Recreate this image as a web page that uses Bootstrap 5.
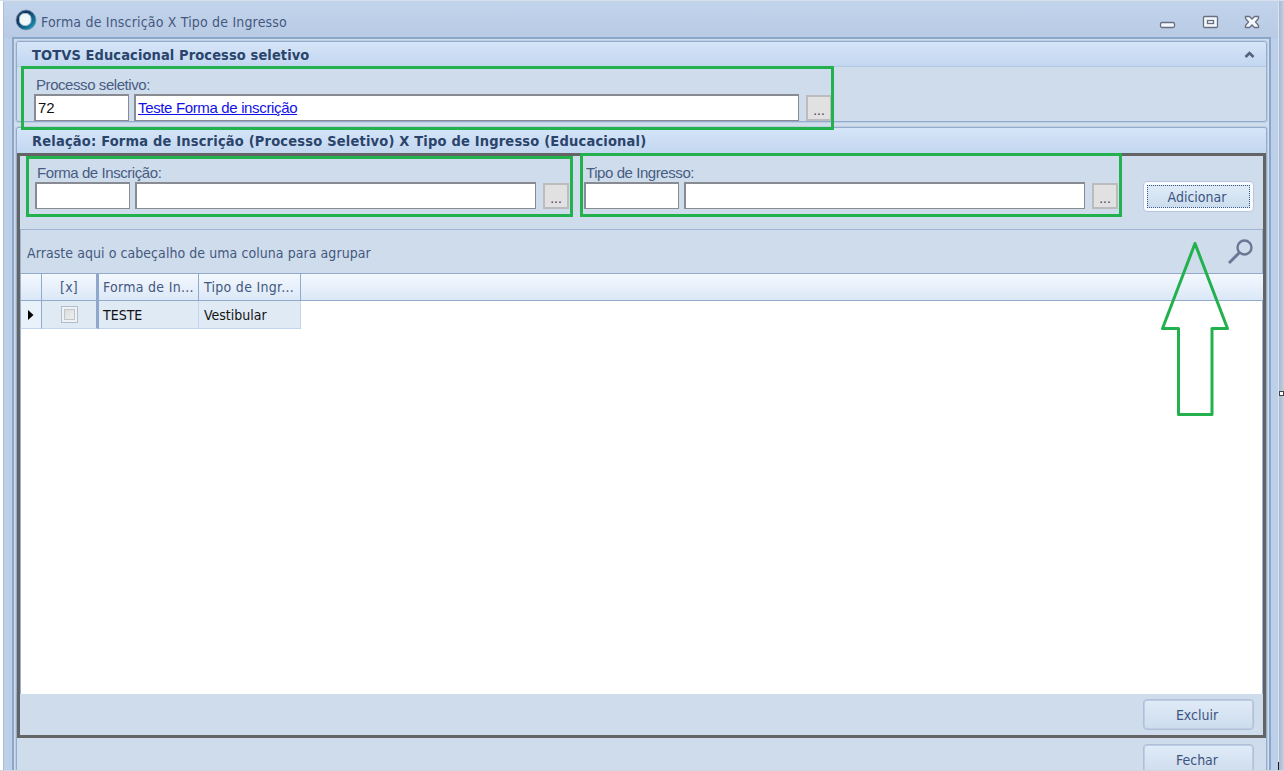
<!DOCTYPE html>
<html lang="pt-BR">
<head>
<meta charset="utf-8">
<title>Forma de Inscrição X Tipo de Ingresso</title>
<link href="https://cdn.jsdelivr.net/npm/bootstrap@5.3.0/dist/css/bootstrap.min.css" rel="stylesheet">
<style>
html,body{height:771px;overflow:hidden}
body{background:#c9d3e5;font:14px/18px "DejaVu Sans Condensed","DejaVu Sans",sans-serif;font-stretch:condensed;color:#44597f;white-space:nowrap}
.desk{width:1284px;height:771px;padding:1px 5px 1px 1px;background:linear-gradient(90deg,#fff 0 3px,#c5d3e7 3px 1279px,#a9b8cd 1279px,#c9cfdd 1284px);border-top:1px solid #d4deed}
.win{margin-left:2px;height:769px;border-left:1px solid #abbdd6;border-right:1px solid #d8e4f3;background:linear-gradient(#c2d4ec,#b9cbe4 36px,#bcd0e9 37px)}
.titlebar{height:35px;padding:3px 17px 0 11px}
.titlebar>svg:first-child{margin-top:-2px}
.titlebar>svg:last-child{margin-top:-1px}
.inner{margin:0 7px 0 8px;height:733px;border:solid #8ba6c8;border-width:2px 2px 0;background:#d0dded;padding:2px 2px 0}
.pane{border:1px solid #93acce;border-radius:3px;background:#cfdcec;overflow:hidden}
.pane-a{height:81px;box-shadow:0 0 0 1px #bdcee3}
.pane-b{height:660px;margin-top:5px;border-bottom:0;box-shadow:0 0 0 1px #bdcee3}
.head{height:25px;padding:0 11px 0 15px;background:linear-gradient(#d6e5f8,#c2d7f0);border-bottom:1px solid #b4c9e2;font-weight:bold;font-size:14.5px;color:#2a446b}
.pane-b .head{border-bottom:0}
.dark{height:585px;border:3px solid #646464;background:#cfdcec}
.lbl{font:15px/18px "Liberation Sans",sans-serif;color:#485c82;letter-spacing:-.43px;padding-left:2px}
.field{height:27px;border:solid #888b91;border-width:2px 1px 1px 2px;background:#fff;font:15px/23px "Liberation Sans",sans-serif;padding-left:2px;color:#111}
.w-s{width:95px}
.w-m{width:401px;margin-left:5px}
.w-l{width:666px;margin-left:5px}
.dots{width:26px;height:26px;margin:1px 0 0 7px;border:2px solid #bcbcbe;background:#e1e1e1;font:14px/26px "Liberation Sans",sans-serif;color:#533a64;text-align:center}
.btx{width:111px;height:31px;border:1px solid #afbfda;border-radius:4px;background:linear-gradient(#e0ebf8,#cddcec);box-shadow:inset 0 0 0 1px #bfcce2;color:#3d5480;padding:0 3px 0 0;font-size:14px;line-height:30px}
.btx-focus{background:#f8fbff;box-shadow:none;padding:3px;border-color:#b8c6df}
.btx-focus span{display:block;height:23px;line-height:22px;padding-right:3px;border:1px dotted #3d5786;background:linear-gradient(#dfecf9,#cbdded)}
.groupbar{height:44px;border:1px solid #9fb4d2;border-width:1px 1px 0;padding:0 8px 0 6px}
.ghead{height:28px;border-top:1px solid #91a9cb;border-bottom:1px solid #91a9cb;background:linear-gradient(#f4f8fe,#dbe8f7);letter-spacing:.28px}
.ghead>div{height:100%;line-height:26px}
.grow>div{height:100%;line-height:28px}
.c0{width:22px;border-left:1px solid #9bb1d0;border-right:1px solid #91a9cb}
.c1{width:57px;border-right:3px solid #8ea7ca}
.c2{width:100px;border-right:1px solid #91a9cb;padding-left:4px}
.c3{width:102px;border-right:1px solid #91a9cb;padding-left:5px}
.grow{height:28px;color:#111;margin-left:-1px}
.grow>div{background:#e0eaf5;border-bottom:1px solid #c1d5f1}
.grow .c2,.grow .c3{border-right-color:#c1d5f1}
.grow .c0{background:#e9f2fb}
.chk{width:17px;height:17px;border:1px solid #b3bdca;background:linear-gradient(135deg,#d5d7da,#f3f3f3);box-shadow:inset 0 0 0 2px #eef1f5,inset 0 0 0 3px #c1c5ca}
.gbody{height:393px;background:#fff;border-left:1px solid #9bb1d0;border-right:1px solid #9bb1d0}
.note{position:absolute;border:3px solid #22b14c}
.overlay{position:absolute;left:0;top:0;pointer-events:none}
</style>
</head>
<body>
<div class="desk position-relative">
 <div class="win">
  <div class="titlebar d-flex align-items-center">
   <svg width="22" height="22" viewBox="0 0 22 22"><defs><linearGradient id="g" x1="0" y1="0" x2="1" y2="1"><stop offset="0" stop-color="#5d7590"/><stop offset=".3" stop-color="#12305c"/><stop offset=".75" stop-color="#157da0"/><stop offset="1" stop-color="#35c1d8"/></linearGradient></defs><circle cx="11" cy="11" r="10" fill="url(#g)" stroke="#7190a9" stroke-width=".7"/><rect x="4.500" y="4.500" width="11.500" height="12" rx="5" fill="#f2f7fa" stroke="#a6c2d2"/></svg>
   <span class="ms-1" style="letter-spacing:.18px;padding-top:2px">Forma de Inscrição X Tipo de Ingresso</span>
   <svg class="ms-auto" width="104" height="18" viewBox="0 0 104 18" fill="none"><rect x="3.500" y="10.500" width="14" height="5" rx="1.500" fill="#f4f7fb" stroke="#676f83" stroke-width="1.300"/><rect x="46.500" y="4.500" width="14" height="11" rx="1" fill="#f4f7fb" stroke="#676f83" stroke-width="1.300"/><rect x="50.500" y="8.500" width="6" height="3" stroke="#676f83" stroke-width="1.300"/><path transform="translate(1 1)" d="M87.500 3.500h4l2.500 2.500 2.500-2.500h4v2L97.500 9l3 3.500v2h-4L94 12l-2.500 2.500h-4v-2L90.500 9l-3-3.500z" fill="#f4f7fb" stroke="#676f83" stroke-width="1.300"/></svg>
  </div>
  <div class="inner">
   <section class="pane pane-a">
    <div class="head d-flex align-items-center justify-content-between"><span style="letter-spacing:.1px;padding-top:1px">TOTVS Educacional Processo seletivo</span><svg width="11" height="9" viewBox="0 0 11 9"><path d="M1.500 7L5.500 3l4 4" fill="none" stroke="#53617c" stroke-width="2.600"/></svg></div>
    <div style="padding:9px 0 0 17px">
     <div class="lbl">Processo seletivo:</div>
     <div class="d-flex"><div class="field w-s">72</div><div class="field w-l" style="width:665px"><a href="#" style="color:#1212e8;letter-spacing:-.35px">Teste Forma de inscrição</a></div><div class="dots">...</div></div>
    </div>
   </section>
   <section class="pane pane-b">
    <div class="head d-flex align-items-center"><span style="letter-spacing:.19px">Relação: Forma de Inscrição (Processo Seletivo) X Tipo de Ingresso (Educacional)</span></div>
    <div class="dark">
     <div class="d-flex" style="height:73px;padding:8px 0 0 15px">
      <div style="width:549px"><div class="lbl">Forma de Inscrição:</div><div class="d-flex"><div class="field w-s"></div><div class="field w-m"></div><div class="dots">...</div></div></div>
      <div style="width:559px"><div class="lbl">Tipo de Ingresso:</div><div class="d-flex"><div class="field w-s"></div><div class="field w-m"></div><div class="dots">...</div></div></div>
      <button class="btx btx-focus" style="margin-top:17px"><span>Adicionar</span></button>
     </div>
     <div class="groupbar d-flex align-items-center justify-content-between"><span style="margin-top:2px;letter-spacing:.06px">Arraste aqui o cabeçalho de uma coluna para agrupar</span><svg style="margin-top:2px" width="27" height="27" viewBox="0 0 27 27" fill="none" stroke="#6a7694"><circle cx="17.500" cy="8.500" r="7" stroke-width="2.400"/><path d="M12.500 13.500L2 24" stroke-width="3"/></svg></div>
     <div class="ghead d-flex"><div class="c0"></div><div class="c1 text-center">[x]</div><div class="c2">Forma de In...</div><div class="c3">Tipo de Ingr...</div></div>
     <div class="gbody"><div class="grow d-flex"><div class="c0 d-flex align-items-center justify-content-center"><svg width="6" height="10"><path d="M0 0l5.500 5L0 10z" fill="#000"/></svg></div><div class="c1 d-flex align-items-center justify-content-center"><div class="chk"></div></div><div class="c2">TESTE</div><div class="c3">Vestibular</div></div></div>
     <div class="d-flex justify-content-end" style="padding:5px 9px 0 0"><button class="btx">Excluir</button></div>
    </div>
    <div class="d-flex justify-content-end" style="padding:6px 12px 0 0"><button class="btx">Fechar</button></div>
   </section>
  </div>
 </div>
 <div class="note" style="left:21px;top:65px;width:813px;height:64px"></div>
 <div class="note" style="left:26px;top:155px;width:547px;height:61px"></div>
 <div class="note" style="left:580px;top:152px;width:542px;height:64px"></div>
 <svg class="overlay" width="1284" height="770" viewBox="0 1 1284 770"><path d="M1195 243.500L1162.500 328.500H1178.500V414.500H1212V328.500H1227.500Z" fill="none" stroke="#22b14c" stroke-width="3" stroke-linejoin="round"/><rect x="1279.500" y="391.500" width="4" height="4" fill="#fff" stroke="#444"/><path d="M1278.500 762v8" stroke="#221b18"/><path d="M0 770.500h1284" stroke="#d3d6db"/></svg>
</div>
<script src="https://cdn.jsdelivr.net/npm/bootstrap@5.3.0/dist/js/bootstrap.bundle.min.js"></script>
</body>
</html>
